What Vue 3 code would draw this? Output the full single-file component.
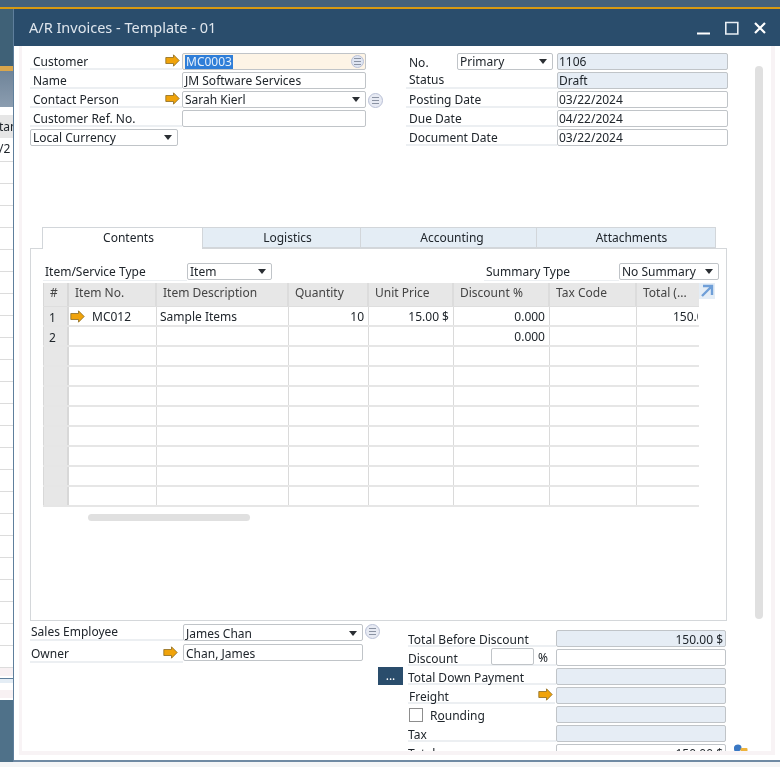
<script setup>
const arrowPath = 'M.8 3.500h7.700V.8l5.700 5.700-5.700 5.700V9.500H.8z'

const headLeft = [
  { label: 'Customer', link: true, value: 'MC0003', kind: 'active' },
  { label: 'Name', value: 'JM Software Services' },
  { label: 'Contact Person', link: true, value: 'Sarah Kierl', select: true, info: true },
  { label: 'Customer Ref. No.', value: '' }
]
const headRight = [
  { label: 'Status', value: 'Draft', ro: true },
  { label: 'Posting Date', value: '03/22/2024' },
  { label: 'Due Date', value: '04/22/2024' },
  { label: 'Document Date', value: '03/22/2024' }
]
const tabs = [
  { name: 'Contents', w: 161, off: 12, active: true },
  { name: 'Logistics', w: 158, off: 12 },
  { name: 'Accounting', w: 176, off: 7 },
  { name: 'Attachments', w: 179, off: 11 }
]
const cols = [
  { name: 'Item No.', w: 88 },
  { name: 'Item Description', w: 132 },
  { name: 'Quantity', w: 80 },
  { name: 'Unit Price', w: 85 },
  { name: 'Discount %', w: 96 },
  { name: 'Tax Code', w: 87 },
  { name: 'Total (...', w: 61 }
]
const rows = [
  { n: '1', cells: ['MC012', 'Sample Items', '10', '15.00 $', '0.000', '', '150.00 $'] },
  { n: '2', cells: ['', '', '', '', '0.000', '', ''] },
  ...Array.from({ length: 8 }, () => ({ n: '', cells: ['', '', '', '', '', '', ''] }))
]
</script>

<template>
  <div class="page">
    <div class="behind">
      <div class="bh-top"></div>
      <div class="bh-orange"></div>
      <div class="bh-grey"></div>
      <div class="bh-list">
        <div class="bh-head">tan</div>
        <div class="bh-row first-row">/2</div>
        <div class="bh-row" v-for="i in 23" :key="i"></div>
        <div class="bh-pink"></div>
        <div class="bh-blue"></div>
        <div class="bh-white"></div>
        <div class="bh-pink"></div>
      </div>
      <div class="bh-bottom"></div>
    </div>

    <div class="topbar"></div>

    <section class="window">
      <header class="title">
        <span class="title-text">A/R Invoices - Template - 01</span>
        <div class="winbtns">
          <svg width="14" height="14" viewBox="0 0 14 14"><path d="M0 12.500h13" stroke="#fff" stroke-width="2"/></svg>
          <svg width="14" height="14" viewBox="0 0 14 14"><path d="M.8 1.500h12v11.500H.8z" fill="none" stroke="#e8eef4" stroke-width="1.600"/></svg>
          <svg width="14" height="14" viewBox="0 0 14 14"><path d="M2 2l10 10M12 2L2 12" stroke="#fff" stroke-width="2.200"/></svg>
        </div>
      </header>

      <div class="body">
        <div class="vscroll"></div>

        <div class="head">
          <div class="head-left">
            <div v-for="f in headLeft" :key="f.label" class="form-row">
              <div class="label">
                <span>{{ f.label }}</span>
                <svg v-if="f.link" class="arrow" width="15" height="13" viewBox="0 0 15 13"><path :d="arrowPath" fill="#f0a30a" stroke="#8a6a20" stroke-width=".8"/></svg>
              </div>
              <div class="input" :class="{ active: f.kind === 'active' }">
                <span v-if="f.kind === 'active'" class="sel">{{ f.value }}</span>
                <span v-else>{{ f.value }}</span>
                <span v-if="f.kind === 'active'" class="list-ic inner"><i></i></span>
                <span v-if="f.select" class="caret"></span>
              </div>
              <span v-if="f.info" class="list-ic"><i></i></span>
            </div>
            <div class="form-row">
              <div class="input currency"><span>Local Currency</span><span class="caret"></span></div>
            </div>
          </div>

          <div class="head-right">
            <div class="form-row">
              <div class="label no-label">
                <span class="no-text">No.</span>
                <div class="input primary"><span>Primary</span><span class="caret"></span></div>
              </div>
              <div class="input ro r-input"><span>1106</span></div>
            </div>
            <div v-for="f in headRight" :key="f.label" class="form-row">
              <div class="label r-label" :class="{ status: f.ro }"><span>{{ f.label }}</span></div>
              <div class="input r-input" :class="{ ro: f.ro }"><span>{{ f.value }}</span></div>
            </div>
          </div>
        </div>

        <nav class="tabs">
          <div v-for="t in tabs" :key="t.name" class="tab" :class="{ on: t.active }" :style="{ width: t.w + 'px', paddingLeft: t.off + 'px' }">{{ t.name }}</div>
        </nav>

        <div class="panel">
          <div class="panel-top">
            <div class="pt-group">
              <span class="pt-label first">Item/Service Type</span>
              <div class="input item-sel"><span>Item</span><span class="caret"></span></div>
            </div>
            <div class="pt-group">
              <span class="pt-label second">Summary Type</span>
              <div class="input sum-sel"><span>No Summary</span><span class="caret"></span></div>
            </div>
          </div>

          <div class="table-wrap">
            <div class="table">
              <div class="t-row t-head">
                <div class="t-num">#</div>
                <div v-for="c in cols" :key="c.name" class="t-cell" :style="{ width: c.w + 'px' }">{{ c.name }}</div>
              </div>
              <div v-for="(r, i) in rows" :key="i" class="t-row t-body">
                <div class="t-num">{{ r.n }}</div>
                <div v-for="(c, j) in cols" :key="c.name" class="t-cell" :class="{ num: j >= 2 && j !== 5, item: j === 0 }" :style="{ width: c.w + 'px' }">
                  <svg v-if="j === 0 && r.cells[0]" class="arrow row-arrow" width="15" height="13" viewBox="0 0 15 13"><path :d="arrowPath" fill="#f0a30a" stroke="#8a6a20" stroke-width=".8"/></svg>
                  <span>{{ r.cells[j] }}</span>
                </div>
              </div>
            </div>
            <svg class="expand" width="16" height="16" viewBox="0 0 16 16">
              <rect width="16" height="16" fill="#e4edf6"/>
              <path d="M4 3h9v9M12.500 3.500L3 13" fill="none" stroke="#6f9fd8" stroke-width="2.400"/>
            </svg>
          </div>
          <div class="hscroll"></div>
        </div>

        <div class="footer">
          <div class="foot-left">
            <div class="fl-row">
              <div class="label fl-label"><span>Sales Employee</span></div>
              <div class="input fl-input"><span>James Chan</span><span class="caret"></span></div>
              <span class="list-ic"><i></i></span>
            </div>
            <div class="fl-row">
              <div class="label fl-label">
                <span>Owner</span>
                <svg class="arrow owner-arrow" width="15" height="13" viewBox="0 0 15 13"><path :d="arrowPath" fill="#f0a30a" stroke="#8a6a20" stroke-width=".8"/></svg>
              </div>
              <div class="input fl-input"><span>Chan, James</span></div>
            </div>
          </div>

          <div class="foot-btn"><button class="dots">...</button></div>

          <div class="foot-right">
            <div class="form-row">
              <div class="label tl"><span>Total Before Discount</span></div>
              <div class="input ro t-input num"><span>150.00 $</span></div>
            </div>
            <div class="form-row">
              <div class="label tl">
                <span>Discount</span>
                <span class="disc-box"><span class="input disc"></span><span class="pct">%</span></span>
              </div>
              <div class="input t-input"></div>
            </div>
            <div class="form-row">
              <div class="label tl"><span>Total Down Payment</span></div>
              <div class="input ro t-input"></div>
            </div>
            <div class="form-row">
              <div class="label tl freight">
                <span>Freight</span>
                <svg class="arrow" width="15" height="13" viewBox="0 0 15 13"><path :d="arrowPath" fill="#f0a30a" stroke="#8a6a20" stroke-width=".8"/></svg>
              </div>
              <div class="input ro t-input"></div>
            </div>
            <div class="form-row">
              <div class="rounding"><span class="check"></span><span>R<u>o</u>unding</span></div>
              <div class="input ro t-input"></div>
            </div>
            <div class="form-row">
              <div class="label tl"><span>Tax</span></div>
              <div class="input ro t-input"></div>
            </div>
            <div class="form-row">
              <div class="label tl"><span>Total</span></div>
              <div class="input t-input num"><span>150.00 $</span></div>
              <svg class="cur-ic" width="15" height="15" viewBox="0 0 15 15">
                <path d="M1 3.500C1 1.500 3 .5 5 .5s3.500 1 3.500 3V6H7.500L6 7.500H2C1 7 1 5 1 3.500z" fill="#3a78c4"/>
                <rect x="7.500" y="4" width="7" height="8" rx="1" fill="#eeb33c"/>
              </svg>
            </div>
          </div>
        </div>
      </div>
    </section>
  </div>
</template>

<style>
html, body { margin: 0; background: #fff; }
</style>

<style scoped>
.page {
  position: relative;
  width: 780px;
  height: 767px;
  overflow: hidden;
  background: #f4f5f6;
  font: 12px/17px "Noto Sans", "Open Sans", sans-serif;
  color: #20262c;
  filter: blur(0.35px);
}
.behind {
  position: absolute;
  left: 0; top: 0;
  width: 14px;
  height: 767px;
  display: flex;
  flex-direction: column;
  overflow: hidden;
}
.bh-top { height: 66px; background: #3f6177; flex: none; }
.bh-orange { height: 5px; background: #d9a64c; flex: none; }
.bh-grey { height: 36px; background: linear-gradient(#6f8499, #8b9db0); flex: none; }
.bh-list { height: 593px; background: #fff; flex: none; overflow: hidden; padding-top: 8px; box-sizing: border-box; }
.bh-head { height: 23px; background: #e6e6e6; line-height: 23px; text-indent: -1px; white-space: nowrap; overflow: hidden; }
.bh-row { height: 22px; box-sizing: border-box; border-bottom: 1px solid #dcdcdc; line-height: 22px; white-space: nowrap; overflow: hidden; }
.first-row { height: 24px; text-indent: -1px; }
.bh-pink { height: 8px; background: #f8f1f3; }
.bh-blue { height: 4px; margin-top: 2px; border-top: 1px solid #5f7f9c; background: #e4edf5; }
.bh-white { height: 7px; }
.bh-bottom { flex: none; height: 62px; background: #4f7189; }

.topbar {
  position: absolute;
  left: 0; top: 0;
  width: 780px;
  height: 7px;
  background: #44627c;
  border-bottom: 2px solid #d79a12;
}
.window {
  position: absolute;
  left: 13px;
  top: 9px;
  width: 767px;
  height: 753px;
  display: flex;
  flex-direction: column;
  background: #fff;
  border-left: 1px solid #5f7f9c;
  border-bottom: 2px solid #6f8aa3;
  box-sizing: border-box;
}
.title {
  flex: none;
  height: 37px;
  background: #2a4d6c;
  display: flex;
  align-items: center;
  justify-content: space-between;
  padding: 0 13px 0 15px;
  color: #dfe6ed;
  font-size: 14.500px;
}
.winbtns { display: flex; gap: 14px; align-items: center; }

.body {
  flex: 1;
  min-height: 0;
  position: relative;
  overflow: hidden;
  margin: 0 5px 5px 5px;
  padding: 7px 0 0 8px;
  box-sizing: border-box;
  border-left: 3px solid #f8f3f5;
  border-right: 4px solid #f8f3f5;
  border-bottom: 4px solid #f8f3f5;
  background: #fff;
}
.vscroll {
  position: absolute;
  left: 733px; top: 20px;
  width: 8px; height: 553px;
  border-radius: 4px;
  background: #e0e0e0;
}

.head { display: flex; height: 174px; }
.head-left { width: 376px; }
.head-right { width: 322px; }

.form-row { display: flex; height: 19px; align-items: flex-start; }
.label {
  display: flex;
  align-items: center;
  justify-content: space-between;
  height: 17px;
  box-sizing: border-box;
  border-bottom: 2px solid #eceff2;
  white-space: nowrap;
  padding-left: 3px;
  width: 152px;
  flex: none;
}
.label > span:first-child { position: relative; top: 1px; }
.status > span:first-child { top: 0; }
.arrow { flex: none; margin-right: 2px; }
.owner-arrow { margin-right: 5px; }

.input {
  position: relative;
  flex: none;
  box-sizing: border-box;
  height: 17px;
  width: 184px;
  background: #fff;
  border: 1px solid #c0c4c8;
  border-radius: 2px;
  padding: 0 2px;
  line-height: 15px;
  white-space: nowrap;
  overflow: hidden;
  display: flex;
  align-items: center;
  justify-content: space-between;
}
.active { background: #fdf4e6; }
.sel { background: #2f7ed8; color: #e6f0fb; padding: 0 1px; height: 14px; line-height: 14px; }
.caret {
  width: 0; height: 0;
  flex: none;
  margin-right: 3px;
  border-left: 4.500px solid transparent;
  border-right: 4.500px solid transparent;
  border-top: 5px solid #2a2e33;
}
.list-ic {
  flex: none;
  width: 13px; height: 13px;
  margin: 2px 0 0 2px;
  border: 1px solid #b9c0d6;
  border-radius: 50%;
  background: #e7eaf3;
  display: flex;
  align-items: center;
  justify-content: center;
  box-sizing: content-box;
}
.list-ic i {
  display: block;
  width: 7px; height: 1px;
  background: #8b93a3;
  box-shadow: 0 -3px 0 #8b93a3, 0 3px 0 #8b93a3;
}
.list-ic.inner {
  position: absolute;
  right: 1px; top: 1px;
  margin: 0;
  width: 11px; height: 11px;
  background: #dfe5f2;
}
.currency { width: 148px; }
.ro { background: #e6edf5; }

.no-label { width: 151px; border-bottom: 0; }
.primary { width: 96px; margin-left: auto; margin-right: 4px; }
.r-label { width: 151px; }
.r-input { width: 171px; padding-left: 1px; }

.tabs { display: flex; margin-left: 12px; height: 21px; box-sizing: border-box; }
.tab {
  box-sizing: border-box;
  height: 21px;
  background: #e4edf5;
  border: 1px solid #d2d6da;
  border-left: 0;
  text-align: center;
  line-height: 20px;
}
.tab.on {
  background: #fff;
  border-left: 1px solid #d2d6da;
  border-bottom: 0;
  height: 22px;
  position: relative;
  z-index: 2;
}

.panel {
  box-sizing: border-box;
  width: 697px;
  height: 373px;
  border: 1px solid #d4d7da;
  padding: 14px 0 0 12px;
  position: relative;
}
.panel-top {
  display: flex;
  justify-content: space-between;
  height: 20px;
  width: 676px;
}
.pt-group { display: flex; }
.pt-label {
  box-sizing: border-box;
  height: 18px;
  line-height: 18px;
  padding-left: 2px;
  border-bottom: 1px solid #eceff2;
  white-space: nowrap;
}
.first { width: 144px; }
.second { width: 135px; }
.item-sel { width: 85px; }
.sum-sel { width: 100px; }

.table-wrap { display: flex; align-items: flex-start; }
.table { width: 656px; overflow: hidden; flex: none; }
.t-row { display: flex; height: 20px; box-sizing: border-box; border-bottom: 2px solid #e6e6e6; }
.t-head { height: 24px; background: #e7e7e7; color: #444; border-bottom: 1px solid #dedede; }
.t-num {
  flex: none;
  width: 26px;
  box-sizing: border-box;
  background: #e7e7e7;
  border-right: 2px solid #d8d8d8;
  border-left: 1px solid #d8d8d8;
  padding-left: 5px;
  line-height: 20px;
}
.t-head .t-num { line-height: 20px; padding-left: 6px; }
.t-body .t-num { padding-top: 1px; }
.t-cell {
  flex: none;
  box-sizing: border-box;
  border-right: 1px solid #dadada;
  padding: 0 3px;
  line-height: 20px;
  white-space: nowrap;
  overflow: hidden;
  display: flex;
  align-items: center;
}
.t-body .t-cell { padding-top: 2px; }
.t-head .t-cell { padding: 0 0 3px 6px; border-right: 2px solid #dcdcdc; }
.t-cell.num { justify-content: flex-end; padding-right: 4px; }
.t-cell.item { gap: 7px; }
.t-cell:last-child { border-right: 0; justify-content: flex-start; }
.t-body .t-cell:last-child { padding-left: 36px; }
.row-arrow { margin-left: -2px; margin-right: 0; margin-top: -1px; }
.expand { flex: none; }
.hscroll {
  width: 162px;
  height: 7px;
  margin: 7px 0 0 45px;
  border-radius: 4px;
  background: #e0e0e0;
}

.footer { display: flex; height: 130px; }
.foot-left { width: 348px; flex: none; padding-top: 1px; }
.fl-row { display: flex; height: 21px; align-items: flex-start; }
.fl-row:first-child { height: 22px; }
.fl-label { width: 153px; height: 19px; padding-left: 1px; }
.fl-row:first-child .input { margin-top: 2px; }
.fl-row:first-child .list-ic { margin-top: 2px; }
.fl-input { width: 180px; padding-top: 1px; }
.foot-btn { width: 30px; flex: none; padding-top: 46px; }
.dots {
  display: block;
  width: 25px;
  height: 18px;
  padding: 0;
  border: 0;
  background: #2a4d6c;
  color: #fff;
  font: 12px/12px "Noto Sans", sans-serif;
}
.foot-right { flex: none; width: 345px; padding-top: 9px; }
.foot-right .label > span:first-child { top: 2px; }
.foot-right .input { padding-top: 1px; }
.tl { width: 148px; padding-left: 0; }
.t-input { width: 170px; }
.t-input.num { justify-content: flex-end; }
.freight { width: 147px; padding-left: 1px; margin-right: 1px; }
.disc-box { display: flex; align-items: center; gap: 4px; }
.disc { width: 43px; height: 17px; display: block; }
.pct { width: 18px; position: relative; top: 1px; }
.rounding { width: 148px; flex: none; display: flex; align-items: center; height: 17px; padding: 1px 0 0 1px; box-sizing: border-box; gap: 7px; }
.check { width: 14px; height: 14px; box-sizing: border-box; border: 1px solid #8d8d8d; background: #fff; flex: none; }
.cur-ic { margin-left: 7px; flex: none; }
</style>
